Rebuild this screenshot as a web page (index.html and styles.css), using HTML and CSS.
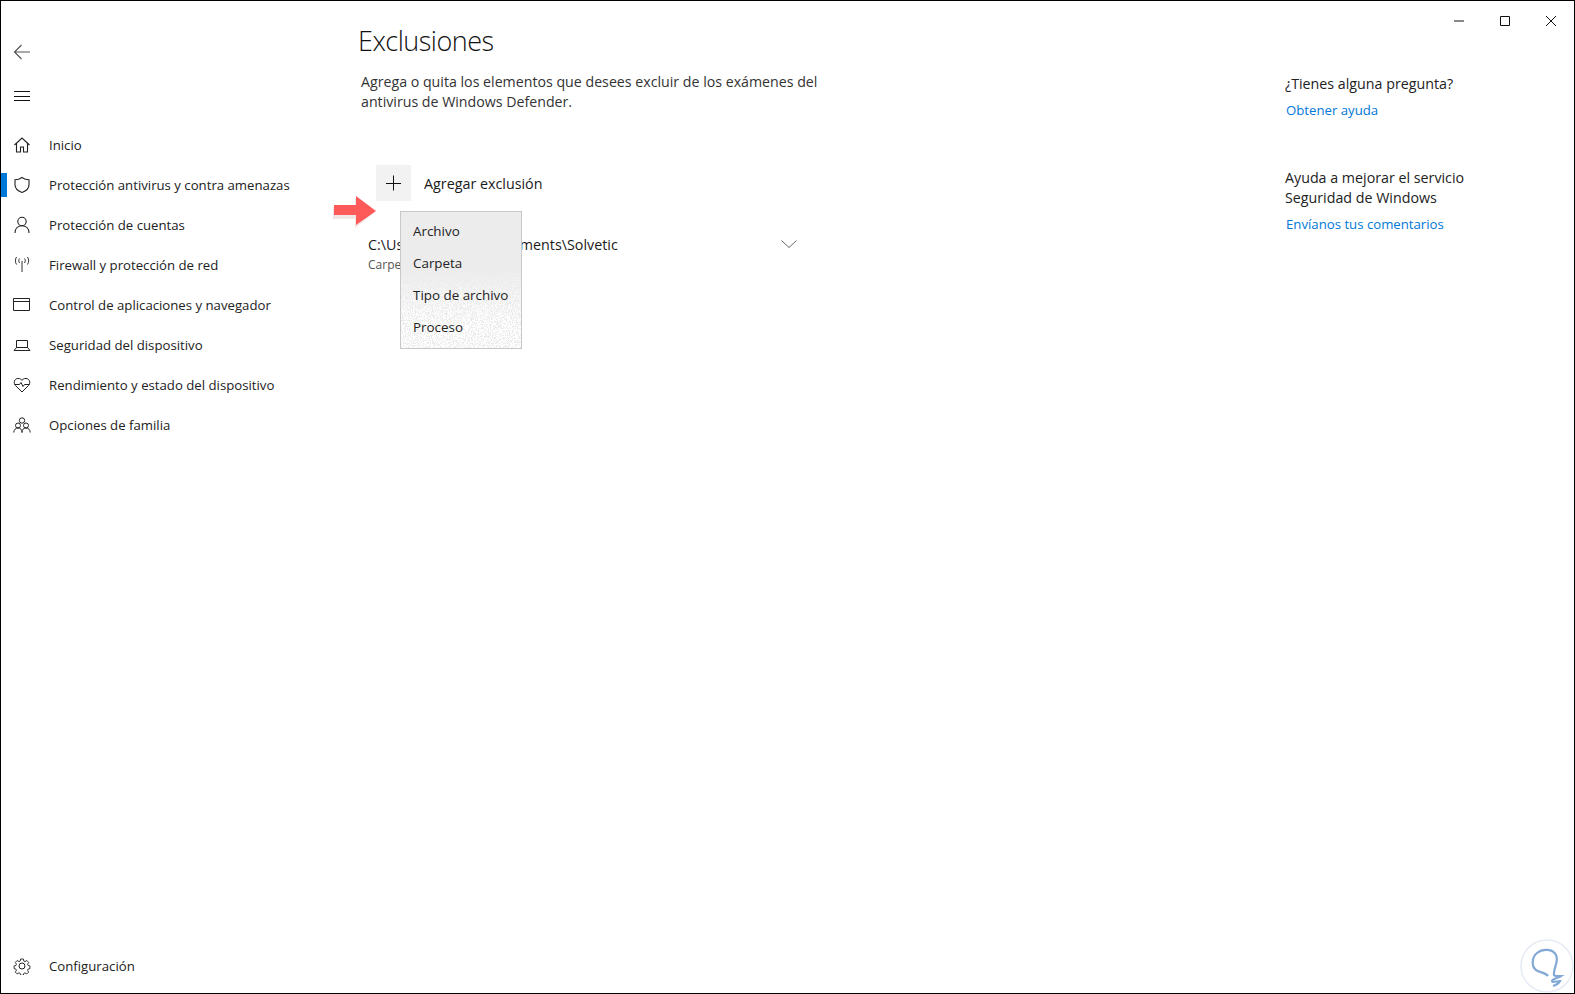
FILE: index.html
```html
<!DOCTYPE html>
<html lang="es">
<head>
<meta charset="utf-8">
<title>Exclusiones</title>
<link rel="stylesheet" href="styles.css">
</head>
<body>
<div class="window">
  <nav class="sidebar">
    <button class="tool first" aria-label="Atrás">
      <svg width="18" height="16" viewBox="0 0 18 16"><path d="M17 8H1.500M8.500 1L1.500 8l7 7" fill="none" stroke="#555" stroke-width="1.200"/></svg>
    </button>
    <button class="tool" aria-label="Menú">
      <svg width="18" height="10" viewBox="0 0 18 10"><path d="M1 .5h16M1 5.500h16M1 9.500h16" fill="none" stroke="#111" stroke-width="1"/></svg>
    </button>
    <ul class="nav-list">
      <li class="nav-item">
        <span class="nav-icon"><svg width="18" height="18" viewBox="0 0 18 18"><path d="M1.500 9L9 2l7.500 7M3.500 7.500V16h4v-5h3v5h4V7.500" fill="none" stroke="#222" stroke-width="1.100"/></svg></span>
        <span>Inicio</span>
      </li>
      <li class="nav-item active">
        <span class="nav-icon"><svg width="18" height="18" viewBox="0 0 18 18"><path d="M9 1.500c2 1.500 4.500 2.300 7 2.300v5c0 3.700-3 6.300-7 7.700-4-1.400-7-4-7-7.700v-5c2.500 0 5-.8 7-2.300z" fill="none" stroke="#222" stroke-width="1.100"/></svg></span>
        <span>Protección antivirus y contra amenazas</span>
      </li>
      <li class="nav-item">
        <span class="nav-icon"><svg width="18" height="18" viewBox="0 0 18 18"><circle cx="9" cy="5.500" r="4.200" fill="none" stroke="#222" stroke-width="1.100"/><path d="M2 17c0-4.500 3-7.300 7-7.300s7 2.800 7 7.300" fill="none" stroke="#222" stroke-width="1.100"/></svg></span>
        <span>Protección de cuentas</span>
      </li>
      <li class="nav-item">
        <span class="nav-icon"><svg width="18" height="18" viewBox="0 0 18 18"><path d="M9 5v11M6.500 2.500c-1 1.500-1 3 0 4.500M11.500 2.500c1 1.500 1 3 0 4.500M3.500 1c-1.500 2.500-1.500 5 0 7.500M14.500 1c1.500 2.500 1.500 5 0 7.500" fill="none" stroke="#333" stroke-width="1"/></svg></span>
        <span>Firewall y protección de red</span>
      </li>
      <li class="nav-item">
        <span class="nav-icon"><svg width="18" height="14" viewBox="0 0 18 14"><path d="M.5.5h16v12H.5zM.5 3.500h16" fill="none" stroke="#222" stroke-width="1"/></svg></span>
        <span>Control de aplicaciones y navegador</span>
      </li>
      <li class="nav-item">
        <span class="nav-icon"><svg width="18" height="14" viewBox="0 0 18 14"><path d="M3.500 2.500h11v7h-11zM1 12.500h16l-2.500-3h-11z" fill="none" stroke="#222" stroke-width="1"/></svg></span>
        <span>Seguridad del dispositivo</span>
      </li>
      <li class="nav-item">
        <span class="nav-icon"><svg width="18" height="16" viewBox="0 0 18 16"><path d="M9 15L2.500 8.500C.5 6.500 1 3 3.500 1.800 5.500 1 7.500 1.500 9 3.300c1.500-1.800 3.500-2.300 5.500-1.500C17 3 17.500 6.500 15.500 8.500z" fill="none" stroke="#222" stroke-width="1"/><path d="M1.500 7.500h5l1.500-2 2 4 1.500-2h5" fill="none" stroke="#222" stroke-width="1"/></svg></span>
        <span>Rendimiento y estado del dispositivo</span>
      </li>
      <li class="nav-item">
        <span class="nav-icon"><svg width="18" height="16" viewBox="0 0 18 16"><g fill="none" stroke="#222" stroke-width="1"><circle cx="9" cy="3.500" r="2.700"/><circle cx="5" cy="8.500" r="2.500"/><circle cx="13" cy="8.500" r="2.500"/><path d="M.8 15.500c0-2.800 1.800-4.500 4.200-4.500s4.200 1.700 4.200 4.500M8.800 15.500c0-2.800 1.800-4.500 4.200-4.500s4.200 1.700 4.200 4.500"/></g></svg></span>
        <span>Opciones de familia</span>
      </li>
    </ul>
    <div class="nav-item settings">
      <span class="nav-icon"><svg width="18" height="18" viewBox="0 0 18 18"><g fill="none" stroke="#222" stroke-width="1"><circle cx="9" cy="9" r="3"/><path d="M7.500 1.200h3l.5 2.300 1.300.6 2.100-1.200 2 2.100-1.200 2 .6 1.400 2 .5v3l-2 .5-.6 1.300 1.200 2.100-2 2-2.100-1.200-1.300.6-.5 2.100h-3l-.5-2.100-1.300-.6-2.100 1.200-2-2 1.200-2.100-.6-1.300-2-.5v-3l2-.5.6-1.400-1.200-2 2-2.100 2.100 1.200 1.300-.6z" transform="translate(.9 .9) scale(.9)"/></g></svg></span>
      <span>Configuración</span>
    </div>
  </nav>

  <main class="content">
    <h1 class="title">Exclusiones</h1>
    <p class="intro">Agrega o quita los elementos que desees excluir de los exámenes del antivirus de Windows Defender.</p>
    <div class="add-row">
      <span class="add-btn"><svg width="16" height="16" viewBox="0 0 16 16"><path d="M7.500 .5v15M0 8.500h15" fill="none" stroke="#111" stroke-width="1"/></svg></span>
      <span class="add-label">Agregar exclusión</span>
    </div>
    <div class="exclusion">
      <div class="exclusion-text">
        <div class="path">C:\Users\Solvetic\Documents\Solvetic</div>
        <div class="kind">Carpeta</div>
      </div>
      <svg class="chevron" width="16" height="8" viewBox="0 0 16 8"><path d="M.5.5L8 7.500 15.500.5" fill="none" stroke="#666" stroke-width="1"/></svg>
    </div>

    <svg class="arrow" width="48" height="36" viewBox="0 0 48 36"><path d="M3 12h22V3l19 15-19 15v-9H3z" fill="#e8d0d0" opacity=".55" transform="translate(-1 1)"/><path d="M3 11h22V2l20 15-20 14v-10H3z" fill="#ff5a5a"/></svg>

    <div class="menu">
      <svg class="menu-grain" width="120" height="136" aria-hidden="true">
        <defs>
          <filter id="grain" x="0" y="0" width="100%" height="100%">
            <feTurbulence type="fractalNoise" baseFrequency="0.95" numOctaves="2" seed="4"/>
            <feColorMatrix type="matrix" values="0 0 0 0 1  0 0 0 0 1  0 0 0 0 1  0 0 0 14 -6.200"/>
          </filter>
          <linearGradient id="grain-fade" x1="0" y1="0" x2="0" y2="1">
            <stop offset=".4" stop-color="#000"/>
            <stop offset=".8" stop-color="#fff"/>
          </linearGradient>
          <mask id="grain-mask"><rect width="120" height="136" fill="url(#grain-fade)"/></mask>
        </defs>
        <g mask="url(#grain-mask)"><rect width="120" height="136" filter="url(#grain)"/></g>
      </svg>
      <ul class="menu-list">
        <li>Archivo</li>
        <li>Carpeta</li>
        <li>Tipo de archivo</li>
        <li>Proceso</li>
      </ul>
    </div>
  </main>

  <aside class="help">
    <div class="controls">
      <svg width="10" height="2" viewBox="0 0 10 2"><path d="M0 1h10" stroke="#111" stroke-width="1"/></svg>
      <svg width="10" height="10" viewBox="0 0 10 10"><path d="M.5.500h9v9h-9z" fill="none" stroke="#111" stroke-width="1"/></svg>
      <svg width="10" height="10" viewBox="0 0 10 10"><path d="M0 0l10 10M10 0L0 10" fill="none" stroke="#111" stroke-width="1"/></svg>
    </div>
    <section class="help-block first-block">
      <h2>¿Tienes alguna pregunta?</h2>
      <a href="#">Obtener ayuda</a>
    </section>
    <section class="help-block">
      <h2>Ayuda a mejorar el servicio<br>Seguridad de Windows</h2>
      <a href="#">Envíanos tus comentarios</a>
    </section>
  </aside>

  <svg class="watermark" width="54" height="54" viewBox="0 0 54 54"><circle cx="27" cy="27" r="26" fill="none" stroke="#e6ebf4" stroke-width="1.500"/><path d="M28 37c-3-4-8-3-12-6-5-4-4-13 1-17 6-5 16-4 19 2 3 6-2 12-2 18-1 4 3 3 7 3-3 2-9 3-9 5 0 2 5 0 8 0-1 2-4 4-7 5" fill="none" stroke="#82a8d6" stroke-width="2.200"/></svg>
</div>
</body>
</html>
```
FILE: styles.css
```css
* { box-sizing: border-box; }
html, body { margin: 0; height: 100%; background: #fff; }
body { font-family: "Open Sans", "Noto Sans", sans-serif; color: #1a1a1a; overflow: hidden; }
.window {
  position: relative;
  display: flex;
  width: 1575px;
  height: 994px;
  border: 1px solid #000;
  overflow: hidden;
}
.sidebar { width: 358px; flex: none; display: flex; flex-direction: column; padding-top: 29px; }
.tool { display: flex; align-items: center; width: 44px; height: 44px; padding: 0 0 0 12px; border: 0; background: none; }
.nav-list { list-style: none; margin: 7px 0 0; padding: 0; flex: 1; }
.nav-item { display: flex; align-items: center; height: 40px; font-size: 13.200px; color: #222; position: relative; }
.nav-icon { display: flex; justify-content: center; align-items: center; width: 48px; padding-right: 6px; flex: none; }
.nav-item.active::before { content: ""; position: absolute; left: 0; top: 8px; width: 6px; height: 24px; background: #0078d7; }
.settings { margin-bottom: 7px; }

.content { position: relative; width: 926px; flex: none; }
.title { margin: 21px 0 0 -1px; font-weight: 300; font-size: 27px; letter-spacing: -.5px; line-height: 38px; color: #111; }
.intro { margin: 12px 0 0 2px; width: 480px; font-size: 14.200px; line-height: 20px; color: #333; }
.add-row { display: flex; align-items: center; margin: 53px 0 0 17px; }
.add-btn { display: flex; align-items: center; justify-content: center; width: 35px; height: 36px; background: #f2f2f2; }
.add-label { margin: 1px 0 0 13px; font-size: 14.300px; color: #1a1a1a; }
.exclusion { display: flex; justify-content: space-between; width: 429px; margin: 34px 0 0 9px; }
.path { font-size: 14.300px; line-height: 20px; color: #1a1a1a; }
.kind { font-size: 12px; line-height: 20px; color: #555; }
.chevron { margin-top: 5px; }
.arrow { position: absolute; left: -28px; top: 193px; }
.menu {
  position: absolute;
  left: 41px;
  top: 210px;
  width: 122px;
  height: 138px;
  border: 1px solid #c8c8c8;
  background: #ececec;
}
.menu-grain { position: absolute; left: 0; top: 0; }
.menu-list { position: relative; list-style: none; margin: 0; padding: 3px 0; }
.menu-list li { height: 32px; line-height: 32px; padding-left: 12px; font-size: 13.400px; color: #222; }

.help { flex: 1; position: relative; }
.controls { display: flex; align-items: center; justify-content: flex-end; gap: 36px; height: 20px; margin-top: 10px; padding-right: 18px; }
.first-block { margin-top: 43px; }
.help-block + .help-block { margin-top: 48px; }
.help-block h2 { margin: 0; font-weight: 400; font-size: 14.250px; line-height: 20px; color: #222; }
.help-block a { display: block; margin: 6px 0 0 1px; font-size: 13.200px; line-height: 20px; color: #0078d7; text-decoration: none; }
.watermark { position: absolute; right: 0; bottom: 0; }
```
